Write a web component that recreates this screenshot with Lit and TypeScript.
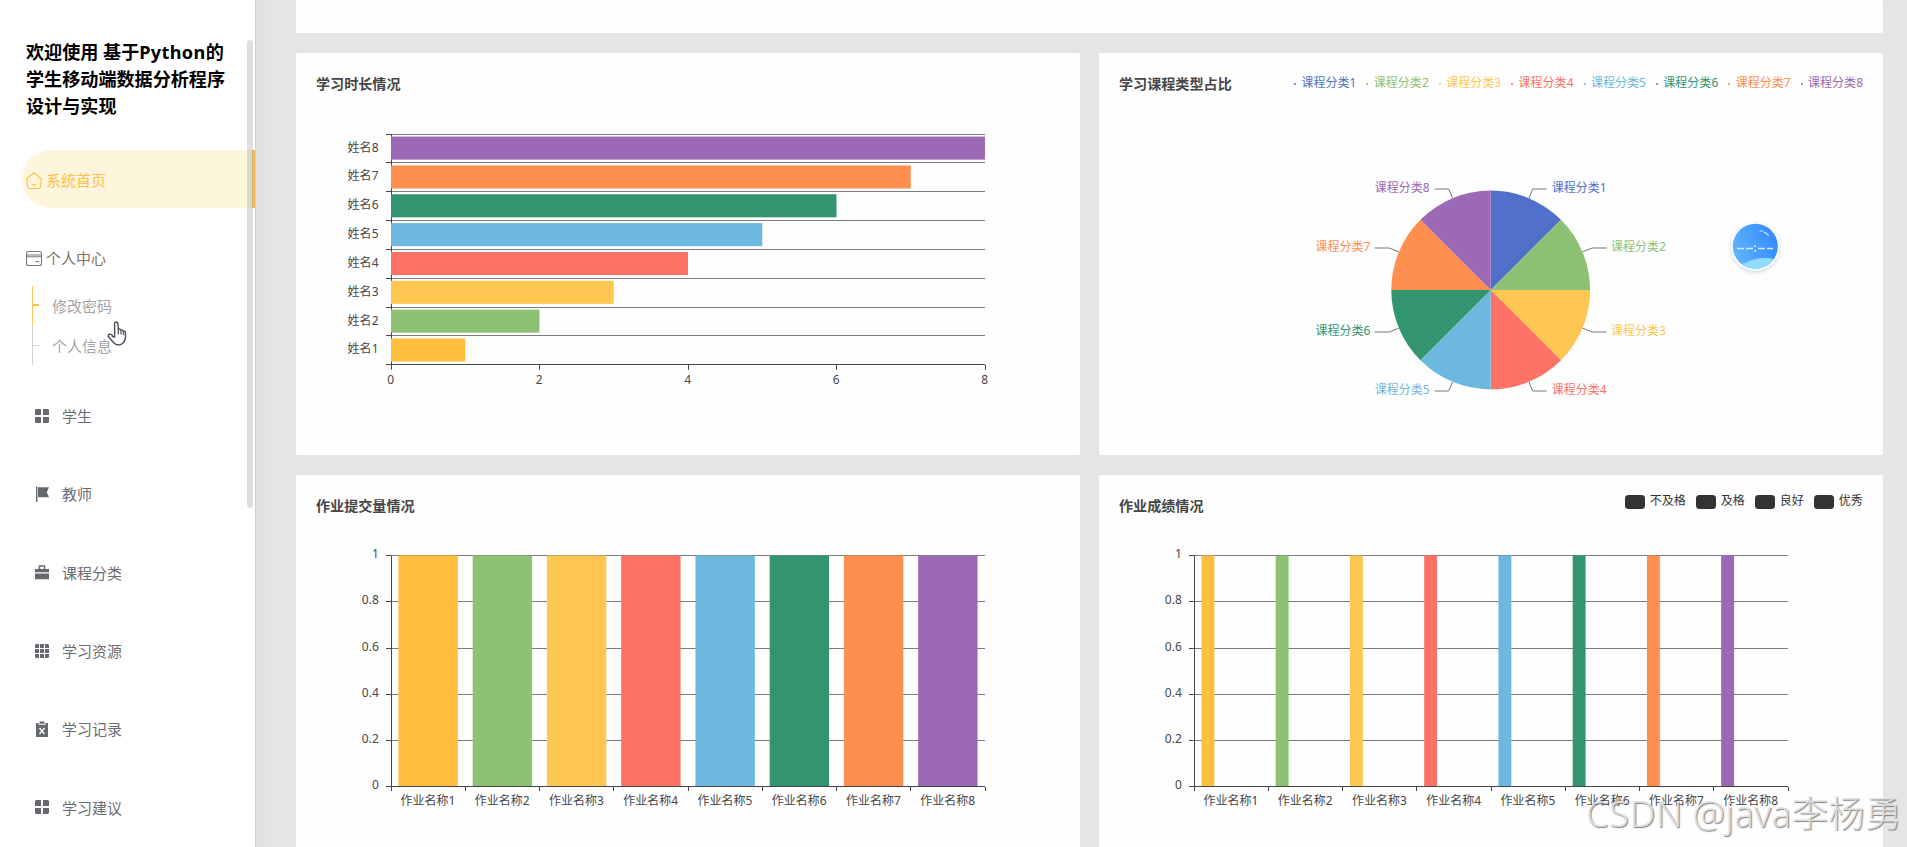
import { LitElement, html, svg, css } from "lit";
import { customElement, property } from "lit/decorators.js";

const COLORS = ["#5070c9", "#8dc174", "#fec751", "#fd7265", "#6db8df", "#329570", "#ff8f4e", "#9c69b5"];
const BAR_COLORS = ["#ffbf3e", ...COLORS.slice(1)];

const PLOT = { left: 95, right: 689, top: 31.1, bottom: 261.8 };
const PLOT_W = PLOT.right - PLOT.left;
const PLOT_H = PLOT.bottom - PLOT.top;

const chartText = css`
  :host {
    display: block;
  }
  svg {
    display: block;
    overflow: visible;
  }
  text {
    font-size: 12px;
    fill: #464646;
    dominant-baseline: central;
  }
  .end {
    text-anchor: end;
  }
  .mid {
    text-anchor: middle;
  }
  .grid {
    stroke: #7c7b80;
    stroke-width: 1;
  }
  .axis {
    stroke: #46454d;
    stroke-width: 1;
  }
`;

const snap = (v: number) => Math.floor(v) + 0.5;

@customElement("duration-chart")
class DurationChart extends LitElement {
  static styles = chartText;

  render() {
    const band = PLOT_H / 8;
    const lines = Array.from({ length: 9 }, (_, i) => snap(PLOT.top + band * i));
    return html`<svg width="783" height="352" viewBox="0 0 783 352">
      ${lines.map((y) => svg`
        <line class="grid" x1=${PLOT.left} x2=${PLOT.right} y1=${y} y2=${y}></line>
        <line class="axis" x1=${PLOT.left - 5} x2=${PLOT.left} y1=${y} y2=${y}></line>`)}
      <line class="axis" x1="95.5" x2="95.5" y1=${PLOT.top} y2=${PLOT.bottom + 4}></line>
      ${BAR_COLORS.map((color, i) => {
        const y = PLOT.bottom - band * (i + 1);
        return svg`
          <rect x=${PLOT.left} y=${y + band * 0.1 - 0.4} width=${(PLOT_W / 8) * (i + 1)} height=${band * 0.8} fill=${color}></rect>
          <text class="end" x="82.5" y=${y + band / 2 - 1.5}>姓名${i + 1}</text>`;
      })}
      <line class="axis" x1=${PLOT.left} x2=${PLOT.right} y1="261.5" y2="261.5"></line>
      ${[0, 2, 4, 6, 8].map((v) => {
        const x = PLOT.left + (PLOT_W / 8) * v;
        return svg`
          <line class="axis" x1=${snap(x)} x2=${snap(x)} y1=${PLOT.bottom} y2=${PLOT.bottom + 5}></line>
          <text class="mid" x=${x - 0.2} y="276">${v}</text>`;
      })}
    </svg>`;
  }
}

@customElement("homework-chart")
class HomeworkChart extends LitElement {
  static styles = chartText;

  @property({ type: Number }) series = 1;

  render() {
    const band = PLOT_W / 8;
    const n = this.series;
    const width = (band * 0.8) / (n + (n - 1) * 0.2);
    return html`<svg width="783" height="322" viewBox="0 0 783 322">
      ${[0, 0.2, 0.4, 0.6, 0.8, 1].map((v) => {
        const y = snap(PLOT.bottom - PLOT_H * v - 0.3);
        return svg`
          <line class="grid" x1=${PLOT.left} x2=${PLOT.right} y1=${y} y2=${y}></line>
          <line class="axis" x1=${PLOT.left - 5} x2=${PLOT.left} y1=${y} y2=${y}></line>
          <text class="end" x="82.8" y=${y - 2.4}>${v}</text>`;
      })}
      <line class="axis" x1="95.5" x2="95.5" y1="31" y2="266"></line>
      ${BAR_COLORS.map((color, i) => svg`
        <rect x=${PLOT.left + band * (i + 0.1)} y="30.500" width=${width} height="231" fill=${color}></rect>
        <text class="mid" x=${PLOT.left + band * (i + 0.5) - 0.3} y="275.6">作业名称${i + 1}</text>`)}
      <line class="axis" x1=${PLOT.left} x2=${PLOT.right} y1="261.5" y2="261.5"></line>
      ${Array.from({ length: 9 }, (_, i) => {
        const x = snap(PLOT.left + band * i);
        return svg`<line class="axis" x1=${x} x2=${x} y1="262" y2="266"></line>`;
      })}
    </svg>`;
  }
}

@customElement("course-pie")
class CoursePie extends LitElement {
  static styles = chartText;

  render() {
    const r = 99.4;
    const at = (deg: number) => {
      const a = ((deg - 90) * Math.PI) / 180;
      return `${(r * Math.cos(a)).toFixed(2)} ${(r * Math.sin(a)).toFixed(2)}`;
    };
    return html`<svg width="783" height="352" viewBox="-391.7 -187 783 352">
      ${COLORS.map((color, i) => {
        const side = i < 4 ? 1 : -1;
        const row = i < 4 ? i : 7 - i;
        const near = row === 0 || row === 3;
        const up = row < 2 ? -1 : 1;
        const [x1, y1, x2, y2, x3, xt] = near
          ? [38.2, 92, 42, 101, 56, 61]
          : [92, 38.2, 101.5, 42, 116, 120.3];
        return svg`
          <path d="M0 0L${at(i * 45)}A${r} ${r} 0 0 1 ${at(i * 45 + 45)}Z" fill=${color}></path>
          <path d="M${x1 * side} ${y1 * up}L${x2 * side} ${y2 * up}H${x3 * side}" fill="none" stroke="#777"></path>
          <text class=${side < 0 ? "end" : ""} x=${xt * side} y=${y2 * up - 1.3} style="fill:${color}">课程分类${i + 1}</text>`;
      })}
    </svg>`;
  }
}

const ICONS: Record<string, unknown> = {
  grid4: svg`<path d="M1 0h5v6H0V1zM8 0h5l1 1v5H8zM0 8h6v6H1l-1-1zM8 8h6v5l-1 1H8z"/>`,
  flag: svg`<path d="M1 -.5h1.400V15H1zM3 .3h11l-2.200 5 2.200 4.900H3z"/>`,
  bag: svg`<path d="M3.700 4V0.300h6.600V4H14v3.200H0V4zM5.200 4h3.600V1.800H5.200zM0 8.500h14V14.300H0z" fill-rule="evenodd"/>`,
  grid9: svg`<path d="M0 1l1-1h3v4H0zM5 0h4v4H5zM10 0h3l1 1v3h-4zM0 5h4v4H0zM5 5h4v4H5zM10 5h4v4h-4zM0 10h4v4H1l-1-1zM5 10h4v4H5zM10 10h4v3l-1 1h-3z"/>`,
  clip: svg`<path d="M1 1h2.500v1.700h7V1H13v14H1zM4.500-.5h5v2.200h-5z"/><path d="M4.500 6l5 6M9.500 6l-5 6" stroke="#fff" stroke-width="1.300"/>`,
};

const MENU: [string, string][] = [
  ["grid4", "学生"],
  ["flag", "教师"],
  ["bag", "课程分类"],
  ["grid9", "学习资源"],
  ["clip", "学习记录"],
  ["grid4", "学习建议"],
];

@customElement("side-bar")
class SideBar extends LitElement {
  static styles = css`
    :host {
      display: block;
      position: relative;
      box-sizing: border-box;
      width: 256px;
      height: 847px;
      background: #fff;
      border-right: 1px solid #d0d0d2;
      overflow: hidden;
    }
    h1 {
      margin: 0;
      padding: 39px 20px 30px 26px;
      font-size: 18.1px;
      line-height: 27px;
      font-weight: 700;
      color: #000;
    }
    .latin {
      letter-spacing: 0.35px;
    }
    .item {
      display: flex;
      align-items: center;
      box-sizing: border-box;
      height: 58.3px;
      margin: 0 0 20px 22px;
      padding: 3px 0 0 4px;
      font-size: 15px;
      color: #86735f;
    }
    .item svg {
      overflow: visible;
      flex: none;
    }
    .item span {
      margin-left: 4px;
      position: relative;
      top: -1px;
    }
    .active {
      background: #fdf5dc;
      color: #fcc04d;
      border-right: 3px solid #efbc58;
      border-radius: 29px 0 0 29px;
    }
    .parent {
      margin-bottom: -1px;
    }
    .item.plain {
      padding-left: 13px;
      color: #6b6d72;
    }
    .item.plain span {
      margin-left: 13px;
      top: 0;
    }
    .sub {
      margin: 0 0 20px 32px;
    }
    .leaf {
      display: flex;
      align-items: center;
      height: 39.7px;
      border-left: 1px solid #d4d4d4;
      font-size: 15px;
      color: #a5a5a5;
    }
    .leaf::before {
      content: "";
      width: 6px;
      height: 1px;
      margin-right: 13px;
      background: #d4d4d4;
    }
    .leaf span {
      padding-top: 1px;
    }
    .hover {
      border-color: #fac456;
    }
    .hover::before {
      background: #fac456;
      height: 2px;
    }
    .thumb {
      position: absolute;
      left: 247px;
      top: 40px;
      width: 6px;
      height: 468px;
      border-radius: 3px;
      background: rgba(144, 147, 153, 0.3);
    }
    .hand {
      position: absolute;
      left: 107px;
      top: 321px;
    }
  `;

  render() {
    return html`
      <h1>欢迎使用 基于<span class="latin">Python</span>的学生移动端数据分析程序设计与实现</h1>
      <div class="item active">
        <svg width="16" height="16" viewBox="0 0 16 16" fill="none" stroke="currentColor" stroke-width="1.100">
          <path d="M8 -.5L15.300 6 14.200 14.500Q14 15.500 13 15.500H3Q2 15.500 1.800 14.500L.6 6ZM6 11.200Q8 12.800 10 11.200" stroke-linejoin="round" />
        </svg>
        <span>系统首页</span>
      </div>
      <div class="item parent">
        <svg width="16" height="16" viewBox="0 0 16 16" fill="none" stroke="#7d7872" stroke-width="1.100">
          <rect x=".5" y=".5" width="15" height="14" rx="2"></rect>
          <path d="M.5 4H15.500M.5 5.700H15.500M9.500 10.500H13" />
        </svg>
        <span>个人中心</span>
      </div>
      <div class="sub">
        <div class="leaf hover"><span>修改密码</span></div>
        <div class="leaf"><span>个人信息</span></div>
      </div>
      ${MENU.map(([icon, label]) => html`
        <div class="item plain">
          <svg width="14" height="14" viewBox="0 0 14 14" fill="#65686e">${ICONS[icon]}</svg>
          <span>${label}</span>
        </div>`)}
      <div class="thumb"></div>
      <svg class="hand" width="20" height="25" viewBox="0 0 20 25">
        <path d="M7.600 16V3Q7.600 1 9.200 1T10.900 3.200L11.400 8.500Q13.200 7.300 14 9.300 15.400 8.500 16.400 10.300 18.500 9.500 18.500 12V16Q18.500 20 15.500 22.500 10.500 26 6.500 21.500L1.200 15.500Q.8 13.500 3 13.200L5 13.800 5.500 15.500Z"
          fill="#fff" stroke="#4a4d5a" stroke-width="1.400" stroke-linejoin="round" />
        <path d="M11.300 8.500V13.500M14 9.500V13.500M16.500 10.500V14" stroke="#4a4d5a" stroke-width="1.200" />
      </svg>
    `;
  }
}

@customElement("app-root")
class AppRoot extends LitElement {
  static styles = css`
    :host {
      display: flex;
      position: relative;
      width: 1907px;
      height: 847px;
      overflow: hidden;
      background: #e5e5e5;
      font-family: "Noto Sans", "Noto Sans CJK SC", sans-serif;
    }
    side-bar {
      flex: none;
    }
    main {
      flex: 1;
      display: grid;
      grid-template-columns: 784px 784px;
      grid-template-rows: 33px 402px 402px;
      gap: 20px 19px;
      padding: 0 24px 0 40px;
      box-shadow: inset 15px 0 0 #e2e2e3;
    }
    section {
      background: #fefefe;
      border-radius: 2px;
      min-width: 0;
    }
    .wide {
      grid-column: 1 / 3;
    }
    header {
      display: flex;
      justify-content: space-between;
      box-sizing: border-box;
      height: 50px;
      padding: 20px 20px 0;
    }
    h2 {
      margin: -1px 0 0;
      font-size: 14.1px;
      line-height: 23px;
      font-weight: 700;
      color: #464646;
    }
    .legend {
      display: flex;
      gap: 10px;
      font-size: 12px;
      line-height: 20px;
      color: #333;
    }
    .dots {
      gap: 11.4px;
    }
    .entry {
      display: flex;
      gap: 5px;
    }
    .dot {
      width: 2px;
      height: 2px;
      margin-top: 10px;
      background: currentColor;
      border-radius: 1px;
    }
    .dots .entry {
      gap: 5.4px;
      margin-right: -1.3px;
    }
    .dots .entry:last-child {
      margin-right: 0;
    }
    .swatch {
      width: 20px;
      height: 14px;
      border-radius: 3.5px;
      background: #333;
    }
    .swatches .label {
      margin-top: -4px;
    }
    .swatches {
      margin-right: 0.3px;
    }
    .globe {
      position: absolute;
      left: 1725px;
      top: 216px;
    }
    .mark {
      position: absolute;
      right: 5px;
      bottom: 7px;
      font-size: 36.5px;
      line-height: 54px;
      font-weight: 300;
      letter-spacing: 0.35px;
      white-space: nowrap;
      color: rgba(228, 228, 228, 0.9);
      text-shadow: 1px 1px 1px rgba(90, 90, 90, 0.75);
    }
  `;

  render() {
    return html`
      <side-bar></side-bar>
      <main>
        <section class="wide"></section>
        <section>
          <header><h2>学习时长情况</h2></header>
          <duration-chart></duration-chart>
        </section>
        <section>
          <header>
            <h2>学习课程类型占比</h2>
            <div class="legend dots">
              ${COLORS.map((c, i) => html`
                <div class="entry" style="color:${c}"><i class="dot"></i><span class="label">课程分类${i + 1}</span></div>`)}
            </div>
          </header>
          <course-pie></course-pie>
        </section>
        <section>
          <header><h2>作业提交量情况</h2></header>
          <homework-chart></homework-chart>
        </section>
        <section>
          <header>
            <h2>作业成绩情况</h2>
            <div class="legend swatches">
              ${["不及格", "及格", "良好", "优秀"].map((t) => html`
                <div class="entry"><i class="swatch"></i><span class="label">${t}</span></div>`)}
            </div>
          </header>
          <homework-chart .series=${4}></homework-chart>
        </section>
      </main>
      <svg class="globe" width="60" height="62" viewBox="0 0 60 62">
        <defs>
          <linearGradient id="sky" x1="0" y1="0.6" x2="1" y2="0.2">
            <stop offset="0" stop-color="#5fb4fd"></stop>
            <stop offset="1" stop-color="#3088fb"></stop>
          </linearGradient>
          <clipPath id="disc"><circle cx="30.300" cy="30.300" r="22.500"></circle></clipPath>
          <filter id="soft" x="-30%" y="-30%" width="160%" height="160%"><feGaussianBlur stdDeviation="2.200"></feGaussianBlur></filter>
        </defs>
        <circle cx="30.300" cy="32" r="24" fill="#9aa7b5" opacity=".5" filter="url(#soft)"></circle>
        <circle cx="30.300" cy="30.300" r="24.700" fill="#f8fcff"></circle>
        <circle cx="30.300" cy="30.300" r="22.500" fill="url(#sky)"></circle>
        <path clip-path="url(#disc)" d="M5 47Q14 50 22 46 34 40 50 43V60H5Z" fill="#8fdcff"></path>
        <path d="M12 32.500H19M21 32.500H28M33 32.500H40M42 32.500H48" stroke="#d7ebff" stroke-width="1.700"></path>
        <path d="M29.300 29.300h1.800v1.800h-1.800zM29.300 34h1.800v1.800h-1.800z" fill="#d7ebff"></path>
        <path d="M34.500 14.500L38 15.500M39 16Q42 17.500 44 20" fill="none" stroke="#c6e2ff" stroke-width="1.200"></path>
      </svg>
      <div class="mark">CSDN @java李杨勇</div>
    `;
  }
}
